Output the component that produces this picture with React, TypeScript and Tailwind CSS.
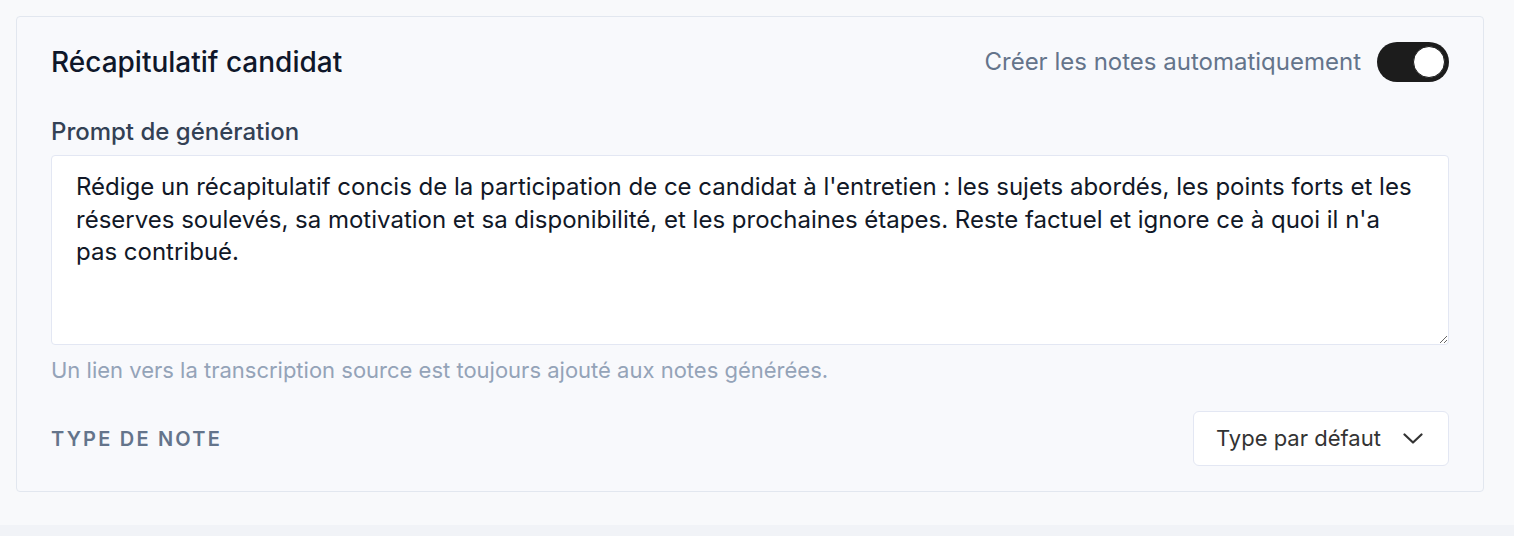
import { useState } from "react";

function Toggle({ on, onChange }: { on: boolean; onChange: () => void }) {
  return (
    <button
      type="button"
      onClick={onChange}
      className={`flex h-10 w-[72px] items-center rounded-full p-[4px] ${on ? "justify-end bg-[#1c1c1c]" : "justify-start bg-[#cbd5e1]"}`}
    >
      <span className="block h-8 w-8 rounded-full border border-[#1c1c1c] bg-white" />
    </button>
  );
}

export default function App() {
  const [auto, setAuto] = useState(true);

  return (
    <div className="flex min-h-[536px] flex-col bg-[#f8f9fb] font-['Inter','Liberation_Sans',sans-serif]">
      <div className="ml-4 mr-[30px] mt-4 mb-[33px] rounded-[4px] border border-[#e2e7ef] bg-[#f8f9fc] px-[34px] py-[25px]">
        {/* Header */}
        <div className="flex h-10 items-center justify-between">
          <h2 className="text-[28px] font-medium leading-10 text-[#0f172a]">Récapitulatif candidat</h2>
          <div className="flex items-center gap-4">
            <span className="text-[24px] text-[#64748b]">Créer les notes automatiquement</span>
            <Toggle on={auto} onChange={() => setAuto(v => !v)} />
          </div>
        </div>

        {/* Prompt */}
        <label className="mt-9 block text-[24px] font-medium leading-7 text-[#334155]">Prompt de génération</label>
        <textarea
          className="mt-[9px] block h-[190px] w-full resize-y rounded-[4px] border border-[#e3e7f3] bg-white pl-6 pr-7 pt-[15px] text-[24px] leading-[32.5px] text-[#111827] outline-none"
          defaultValue="Rédige un récapitulatif concis de la participation de ce candidat à l'entretien : les sujets abordés, les points forts et les réserves soulevés, sa motivation et sa disponibilité, et les prochaines étapes. Reste factuel et ignore ce à quoi il n'a pas contribué."
        />
        <p className="mt-[11px] text-[22px] leading-7 text-[#94a3b8]">
          Un lien vers la transcription source est toujours ajouté aux notes générées.
        </p>

        {/* Note type */}
        <div className="mt-[27px] flex items-center justify-between">
          <span className="text-[20px] font-semibold uppercase tracking-[0.11em] text-[#64748b]">Type de note</span>
          <button
            type="button"
            className="flex h-[55px] w-[256px] items-center gap-[22px] rounded-[6px] border border-[#e3e7f3] bg-white pl-[22px] text-[22px] text-[#333333]"
          >
            <span>Type par défaut</span>
            <svg width="20" height="11" viewBox="0 0 20 11" fill="none">
              <polyline points="1.5,1.5 10,9.5 18.5,1.5" stroke="#333333" strokeWidth="2.2" strokeLinecap="round" strokeLinejoin="round" />
            </svg>
          </button>
        </div>
      </div>
      <div className="flex-1 bg-[#f1f3f7]" />
    </div>
  );
}
